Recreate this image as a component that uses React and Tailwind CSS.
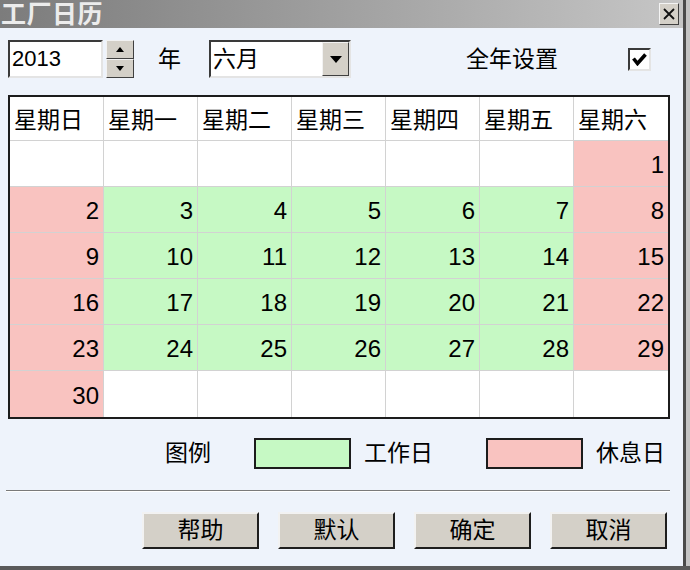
import React from "react";

const FONT = "font-['Liberation_Sans','Noto_Sans_CJK_SC',sans-serif]";

const headers = ["星期日", "星期一", "星期二", "星期三", "星期四", "星期五", "星期六"];

// June 2013 starts on a Saturday
const buildCells = () => {
  const cells = [];
  for (let i = 0; i < 42; i++) {
    const day = i - 5;
    const col = i % 7;
    if (day < 1 || day > 30) {
      cells.push({ day: null, kind: "empty" });
    } else {
      cells.push({ day, kind: col === 0 || col === 6 ? "rest" : "work" });
    }
  }
  return cells;
};

const cellBg = {
  empty: "bg-white",
  work: "bg-[#c6f9c4]",
  rest: "bg-[#f9c3c0]",
};

const Raised = ({ className = "", children }) => (
  <div
    className={`bg-[#d4d0c8] border-t-2 border-l-2 border-b-2 border-r-2 border-t-[#f2f2f2] border-l-[#f2f2f2] border-b-[#1e1e1e] border-r-[#1e1e1e] flex items-center justify-center ${className}`}
  >
    {children}
  </div>
);

const Sunken = ({ className = "", children }) => (
  <div
    className={`bg-white border-t-2 border-l-2 border-b-2 border-r-2 border-t-[#3a3a3a] border-l-[#3a3a3a] border-b-[#e4e4e4] border-r-[#e4e4e4] ${className}`}
  >
    {children}
  </div>
);

const App = () => {
  const cells = buildCells();

  return (
    <div className={`w-[690px] h-[570px] flex flex-col overflow-hidden text-black ${FONT}`}>
      <div className="flex flex-1">
        <div className="w-[683px] flex flex-col">
          {/* Title bar */}
          <div className="h-[28px] flex items-center justify-between bg-gradient-to-r from-[#7c7c7c] to-[#c6c6c6] pl-[1px] pr-[4px]">
            <span className="text-[25px] leading-none font-bold text-[#ececec] tracking-[0.5px]">
              工厂日历
            </span>
            <Raised className="w-[20px] h-[22px] !border-[1px] !border-t-[#f4f4f4] !border-l-[#f4f4f4] !border-b-[#404040] !border-r-[#404040]">
              <svg width="12" height="12" viewBox="0 0 12 12">
                <path d="M1 1 L11 11 M11 1 L1 11" stroke="#111" strokeWidth="1.8" />
              </svg>
            </Raised>
          </div>

          {/* Body */}
          <div className="flex-1 bg-[#eef3fb] flex flex-col">
            {/* Top controls */}
            <div className="mt-[12px] h-[38px] flex items-center pl-[8px]">
              <Sunken className="w-[95px] h-[38px] flex items-center pl-[2px]">
                <span className="text-[22px] leading-none">2013</span>
              </Sunken>
              <div className="ml-[3px] w-[28px] h-[38px] flex flex-col">
                <Raised className="h-[19px] !border-[1px] !border-b-[#404040] !border-r-[#404040]">
                  <svg width="8" height="5" viewBox="0 0 8 5">
                    <path d="M0 5 L4 0 L8 5 Z" fill="#000" />
                  </svg>
                </Raised>
                <Raised className="h-[19px] !border-[1px] !border-b-[#404040] !border-r-[#404040]">
                  <svg width="8" height="5" viewBox="0 0 8 5">
                    <path d="M0 0 L8 0 L4 5 Z" fill="#000" />
                  </svg>
                </Raised>
              </div>
              <span className="ml-[24px] text-[23px] leading-none">年</span>
              <Sunken className="ml-[28px] w-[142px] h-[38px] flex items-center justify-between">
                <span className="pl-[2px] text-[23px] leading-none">六月</span>
                <Raised className="w-[27px] h-[34px] !border-[1px] !border-b-[#404040] !border-r-[#404040]">
                  <svg width="12" height="7" viewBox="0 0 12 7">
                    <path d="M0 0 L12 0 L6 7 Z" fill="#000" />
                  </svg>
                </Raised>
              </Sunken>
              <span className="ml-[115px] text-[23px] leading-none">全年设置</span>
              <Sunken className="ml-[70px] w-[23px] h-[23px] flex items-center justify-center">
                <svg className="shrink-0" width="15" height="13" viewBox="0 0 15 13">
                  <path d="M1.5 5.5 L5.5 10.5 L13.5 1.5" fill="none" stroke="#000" strokeWidth="3.6" />
                </svg>
              </Sunken>
            </div>

            {/* Calendar grid */}
            <div className="mt-[17px] ml-[8px] w-[662px] border-2 border-[#1c1c1c] bg-white">
              <div className="grid grid-cols-7">
                {headers.map((h, i) => (
                  <div
                    key={h}
                    className={`h-[44px] flex items-center pl-[4px] pt-[4px] bg-white border-b border-[#d2d2d2] ${i < 6 ? "border-r" : ""}`}
                  >
                    <span className="text-[23px] leading-none">{h}</span>
                  </div>
                ))}
                {cells.map((c, i) => (
                  <div
                    key={i}
                    className={`h-[46px] flex items-center justify-end pr-[4px] pt-[3px] border-[#d2d2d2] ${cellBg[c.kind]} ${i % 7 < 6 ? "border-r" : ""} ${i < 35 ? "border-b" : ""}`}
                  >
                    {c.day && <span className="text-[24px] leading-none">{c.day}</span>}
                  </div>
                ))}
              </div>
            </div>

            {/* Legend */}
            <div className="mt-[19px] h-[31px] flex items-center">
              <span className="ml-[165px] text-[23px] leading-none">图例</span>
              <div className="ml-[43px] w-[97px] h-[31px] border-2 border-[#1c1c1c] bg-[#c6f9c4]" />
              <span className="ml-[13px] text-[23px] leading-none">工作日</span>
              <div className="ml-[53px] w-[97px] h-[31px] border-2 border-[#1c1c1c] bg-[#f9c3c0]" />
              <span className="ml-[13px] text-[23px] leading-none">休息日</span>
            </div>

            {/* Separator */}
            <div className="mt-[21px] ml-[6px] w-[664px] border-t border-t-[#7a7a7a] border-b border-b-white" />

            {/* Buttons */}
            <div className="mt-[20px] flex pl-[142px] gap-[19px]">
              {["帮助", "默认", "确定", "取消"].map((b) => (
                <Raised key={b} className="w-[117px] h-[37px]">
                  <span className="text-[23px] leading-none">{b}</span>
                </Raised>
              ))}
            </div>
          </div>
        </div>
        <div className="w-[3px] bg-[#4a4a4a]" />
        <div className="w-[4px] bg-[#c4c4c4]" />
      </div>
      <div className="h-[4px] bg-[#5a5a5a]" />
    </div>
  );
};

export default App;
